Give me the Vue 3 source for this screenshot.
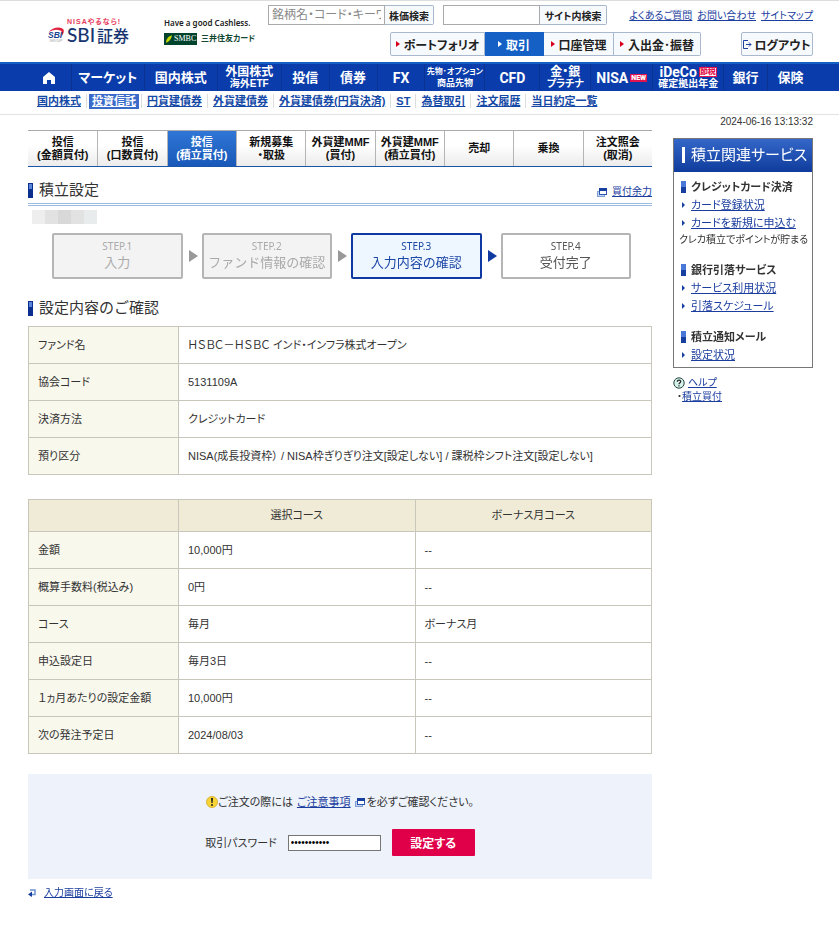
<script setup>
import { ref } from 'vue'

const stockQuery = ref('')
const siteQuery = ref('')
const password = ref('password123')

const helpLinks = ['よくあるご質問', 'お問い合わせ', 'サイトマップ']

const actions = [
  { label: 'ポートフォリオ' },
  { label: '取引', active: true },
  { label: '口座管理' },
  { label: '入出金･振替' },
]

const globalNav = [
  { label: 'マーケット' },
  { label: '国内株式' },
  { label: '外国株式', sub: '海外ETF' },
  { label: '投信' },
  { label: '債券' },
  { label: 'FX', latin: true },
  { label: '先物･オプション', sub: '商品先物', small: true },
  { label: 'CFD', latin: true },
  { label: '金・銀', sub: 'プラチナ' },
  { label: 'NISA', latin: true, badge: 'NEW' },
  { label: 'iDeCo', sub: '確定拠出年金', tag: '節税', latin: true },
  { label: '銀行' },
  { label: '保険' },
]

const subNav = [
  { label: '国内株式' },
  { label: '投資信託', active: true },
  { label: '円貨建債券' },
  { label: '外貨建債券' },
  { label: '外貨建債券(円貨決済)' },
  { label: 'ST' },
  { label: '為替取引' },
  { label: '注文履歴' },
  { label: '当日約定一覧' },
]

const tabs = [
  { lines: ['投信', '(金額買付)'] },
  { lines: ['投信', '(口数買付)'] },
  { lines: ['投信', '(積立買付)'], active: true },
  { lines: ['新規募集', '・取扱'] },
  { lines: ['外貨建MMF', '(買付)'] },
  { lines: ['外貨建MMF', '(積立買付)'] },
  { lines: ['売却'] },
  { lines: ['乗換'] },
  { lines: ['注文照会', '(取消)'] },
]

const steps = [
  { no: 'STEP.1', label: '入力', state: 'done' },
  { no: 'STEP.2', label: 'ファンド情報の確認', state: 'done' },
  { no: 'STEP.3', label: '入力内容の確認', state: 'current' },
  { no: 'STEP.4', label: '受付完了', state: 'next' },
]

const fundRows = [
  ['ファンド名', 'ＨＳＢＣ－ＨＳＢＣ インド・インフラ株式オープン'],
  ['協会コード', '5131109A'],
  ['決済方法', 'クレジットカード'],
  ['預り区分', 'NISA(成長投資枠） / NISA枠ぎりぎり注文[設定しない] / 課税枠シフト注文[設定しない]'],
]

const courseRows = [
  ['金額', '10,000円', '--'],
  ['概算手数料(税込み)', '0円', '--'],
  ['コース', '毎月', 'ボーナス月'],
  ['申込設定日', '毎月3日', '--'],
  ['１ヵ月あたりの設定金額', '10,000円', '--'],
  ['次の発注予定日', '2024/08/03', '--'],
]

const services = [
  {
    title: 'クレジットカード決済',
    links: ['カード登録状況', 'カードを新規に申込む'],
    note: 'クレカ積立でポイントが貯まる',
  },
  { title: '銀行引落サービス', links: ['サービス利用状況', '引落スケジュール'] },
  { title: '積立通知メール', links: ['設定状況'] },
]
</script>

<template>
  <div class="page">
    <header class="header">
      <a href="#" class="logo">
        <svg class="logo-mark" viewBox="0 0 32 32" aria-hidden="true">
          <path d="M1 11 C8 0 26 -2 31 5 C33 9 30 15 27 19 C29 12 28 8 24 7 C17 4 8 6 1 11 Z" fill="#e0203c" />
          <text x="0" y="22" class="mark-text">SBI</text>
          <text x="3" y="30" class="mark-group">GROUP</text>
        </svg>
        <span class="logo-words">
          <span class="logo-tag">NISAやるなら!</span>
          <span class="logo-name"><span class="logo-latin">SBI</span>証券</span>
        </span>
      </a>
      <div class="cashless">
        <span class="cashless-copy">Have a good Cashless.</span>
        <span class="cashless-brand">
          <span class="smbc">
            <svg viewBox="0 0 8 10" aria-hidden="true"><path d="M0 10 C0 5 3 1 8 0 C7 5 5 8 0 10Z" fill="#c4d700" /></svg>SMBC
          </span>
          <span class="card-name">三井住友カード</span>
        </span>
      </div>
      <div class="tools">
        <div class="tool-row">
          <form class="search" @submit.prevent>
            <input v-model="stockQuery" class="search-stock" type="text" aria-label="銘柄検索" placeholder="銘柄名・コード・キーワード" />
            <button type="submit">株価検索</button>
          </form>
          <form class="search" @submit.prevent>
            <input v-model="siteQuery" class="search-site" type="text" aria-label="サイト内検索" />
            <button type="submit" class="wide">サイト内検索</button>
          </form>
          <nav class="help-links">
            <a v-for="l in helpLinks" :key="l" href="#">{{ l }}</a>
          </nav>
        </div>
        <div class="action-row">
          <div class="actions">
            <button v-for="a in actions" :key="a.label" type="button" :class="{ active: a.active }">
              <i class="caret"></i>{{ a.label }}
            </button>
          </div>
          <button type="button" class="logout">
            <svg viewBox="0 0 9 9" aria-hidden="true">
              <path d="M5 .5H.5V8.5H5M3 4.5H8M6 2.5L8 4.5L6 6.5" fill="none" stroke="#1d3fa0" />
            </svg>ログアウト
          </button>
        </div>
      </div>
    </header>

    <nav class="global-nav">
      <a href="#" aria-label="ホーム">
        <svg class="home" viewBox="0 0 12 12"><path d="M6 0L12 5V12H8V8H4V12H0V5Z" fill="#fff" /></svg>
      </a>
      <a v-for="n in globalNav" :key="n.label" href="#" :class="{ double: n.sub, small: n.small, latin: n.latin }">
        <span class="nav-main">{{ n.label }}<b v-if="n.badge" class="new">{{ n.badge }}</b><b v-if="n.tag" class="tag">{{ n.tag }}</b></span>
        <span v-if="n.sub" class="nav-sub">{{ n.sub }}</span>
      </a>
    </nav>

    <nav class="sub-nav">
      <span v-for="s in subNav" :key="s.label" class="sub-item">
        <a href="#" :class="{ active: s.active }">{{ s.label }}</a>
      </span>
    </nav>

    <p class="stamp">2024-06-16 13:13:32</p>

    <div class="columns">
      <main class="main">
        <nav class="tabs">
          <a v-for="(t, i) in tabs" :key="i" href="#" :class="{ active: t.active }">
            <span v-for="line in t.lines" :key="line">{{ line }}</span>
          </a>
        </nav>

        <div class="title-bar">
          <h1 class="heading">積立設定</h1>
          <a href="#" class="power">
            <svg class="window-icon" viewBox="0 0 10 9" aria-hidden="true">
              <rect x=".5" y="3.500" width="7" height="5" fill="#c5d5ef" stroke="#7f9fd6" />
              <rect x="2.500" y=".5" width="7" height="6" fill="#fff" stroke="#2b56b0" />
              <path d="M2 0H10V3H2Z" fill="#173f9f" />
            </svg>
            <span>買付余力</span>
          </a>
        </div>

        <div class="mosaic" aria-hidden="true"><i></i><i></i><i></i><i></i><i></i></div>

        <ol class="steps">
          <li v-for="s in steps" :key="s.no" :class="s.state">
            <span class="step-no">{{ s.no }}</span>
            <span class="step-label">{{ s.label }}</span>
          </li>
        </ol>

        <h2 class="heading second">設定内容のご確認</h2>

        <table class="grid">
          <tbody>
            <tr v-for="r in fundRows" :key="r[0]">
              <th scope="row">{{ r[0] }}</th>
              <td>{{ r[1] }}</td>
            </tr>
          </tbody>
        </table>

        <table class="grid course">
          <thead>
            <tr>
              <th></th>
              <th scope="col">選択コース</th>
              <th scope="col">ボーナス月コース</th>
            </tr>
          </thead>
          <tbody>
            <tr v-for="r in courseRows" :key="r[0]">
              <th scope="row">{{ r[0] }}</th>
              <td>{{ r[1] }}</td>
              <td>{{ r[2] }}</td>
            </tr>
          </tbody>
        </table>

        <form class="confirm" @submit.prevent>
          <p class="notice">
            <svg class="warn" viewBox="0 0 12 12" aria-hidden="true">
              <circle cx="6" cy="6" r="5.500" fill="#f7d535" stroke="#d9b43a" />
              <path d="M5 2H7L6.600 7H5.400Z" fill="#222" />
              <circle cx="6" cy="9" r="1" fill="#222" />
            </svg>
            <span>ご注文の際には</span>
            <a href="#">ご注意事項</a>
            <svg class="window-icon" viewBox="0 0 10 9" aria-hidden="true">
              <rect x=".5" y="3.500" width="7" height="5" fill="#c5d5ef" stroke="#7f9fd6" />
              <rect x="2.500" y=".5" width="7" height="6" fill="#fff" stroke="#2b56b0" />
              <path d="M2 0H10V3H2Z" fill="#173f9f" />
            </svg>
            <span>を必ずご確認ください。</span>
          </p>
          <div class="password-row">
            <label for="trade-password">取引パスワード</label>
            <input id="trade-password" v-model="password" type="password" autocomplete="off" autofocus />
            <button type="submit">設定する</button>
          </div>
        </form>

        <a href="#" class="back">
          <svg viewBox="0 0 8 8" aria-hidden="true">
            <path d="M2 1H7V5.500H3" fill="none" stroke="#6d92d2" stroke-width="1.500" />
            <path d="M0 5.500L4 2.500V8Z" fill="#173f9f" />
          </svg>
          <span>入力画面に戻る</span>
        </a>
      </main>

      <aside class="side">
        <section class="services">
          <h2>積立関連サービス</h2>
          <div v-for="s in services" :key="s.title" class="service">
            <h3>{{ s.title }}</h3>
            <ul>
              <li v-for="l in s.links" :key="l"><a href="#">{{ l }}</a></li>
            </ul>
            <p v-if="s.note">{{ s.note }}</p>
          </div>
        </section>
        <div class="help">
          <svg viewBox="0 0 12 12" aria-hidden="true">
            <circle cx="6" cy="6" r="5.200" fill="#d7f2ea" stroke="#24463e" />
            <path d="M4.300 4.800C4.300 2.600 7.800 2.700 7.700 4.700C7.600 5.800 6 5.900 6 7.300M6 8.300V9.400" fill="none" stroke="#222" stroke-width="1.200" />
          </svg>
          <a href="#">ヘルプ</a>
        </div>
        <div class="help-item">・<a href="#">積立買付</a></div>
      </aside>
    </div>
  </div>
</template>

<style>
body {
  margin: 0;
  background: #fff;
}
</style>

<style scoped>
.page {
  border-top: 1px solid #ddd;
  color: #333;
  font-family: "Liberation Sans", "Noto Sans CJK JP", sans-serif;
  font-size: 11px;
  line-height: 16px;
  font-feature-settings: "palt";
}
.page * {
  box-sizing: border-box;
}
a {
  color: #1a3d9e;
}
p, h1, h2, h3, ul, ol {
  margin: 0;
  padding: 0;
}
ul, ol {
  list-style: none;
}
button, input {
  font-family: inherit;
  font-feature-settings: inherit;
  margin: 0;
}
button {
  white-space: nowrap;
}

/* header */
.header {
  display: flex;
  height: 61px;
  padding: 4px 26px 0 48px;
}
.logo {
  display: flex;
  width: 83px;
  padding-top: 12px;
  text-decoration: none;
}
.logo-mark {
  width: 16px;
  height: 16px;
  margin-top: 10px;
  margin-right: 3px;
}
.mark-text {
  font: italic bold 17px "Liberation Sans", sans-serif;
  fill: #183f8c;
}
.mark-group {
  font: 7px "Liberation Sans", sans-serif;
  fill: #999;
}
.logo-words {
  display: flex;
  flex-direction: column;
  white-space: nowrap;
}
.logo-tag {
  color: #e63c5c;
  font-size: 7px;
  font-weight: bold;
  line-height: 9px;
  letter-spacing: 1px;
}
.logo-name {
  display: flex;
  align-items: center;
  gap: 2px;
  color: #17356f;
  font-family: "Noto Sans CJK JP", sans-serif;
  font-size: 16px;
  font-weight: 500;
  line-height: 18px;
}
.logo-latin {
  font-family: Lato, sans-serif;
  font-size: 19px;
}
.cashless {
  display: flex;
  flex-direction: column;
  width: 92px;
  margin-left: 33px;
  padding-top: 11px;
  gap: 1px;
  white-space: nowrap;
}
.cashless-copy {
  color: #222;
  font-family: "Noto Sans", sans-serif;
  font-size: 8px;
  font-weight: 600;
  line-height: 14px;
}
.cashless-brand {
  display: flex;
  align-items: center;
  gap: 4px;
}
.smbc {
  display: flex;
  align-items: center;
  gap: 2px;
  width: 33px;
  height: 12px;
  padding-left: 2px;
  background: #00432d;
  color: #fff;
  font-family: "Liberation Serif", serif;
  font-size: 8px;
}
.smbc svg {
  width: 6px;
  height: 8px;
}
.card-name {
  color: #124832;
  font-size: 8px;
  font-weight: bold;
}
.tools {
  flex: 1;
  margin-left: 12px;
  min-width: 0;
}
.tool-row {
  display: flex;
  gap: 9px;
}
.search {
  display: flex;
}
.search input {
  height: 20px;
  padding: 0 3px;
  border: 1px solid #aaa;
  border-radius: 0;
  background: #fff;
  font-size: 12px;
  outline: 0;
}
.search input::placeholder {
  color: #888;
}
.search-stock {
  width: 117px;
}
.search-site {
  width: 97px;
}
.search button {
  width: 49px;
  height: 20px;
  padding: 0;
  border: 1px solid #a9b7cd;
  border-left: 0;
  border-radius: 0 2px 2px 0;
  background: #f7fafd;
  color: #222;
  font-size: 10px;
  font-weight: bold;
}
.search button.wide {
  width: 67px;
}
.help-links {
  display: flex;
  gap: 5px;
  margin-left: auto;
  padding-top: 3px;
  font-size: 10px;
  white-space: nowrap;
}
.action-row {
  display: flex;
  justify-content: space-between;
  margin-top: 7px;
  padding-left: 122px;
}
.actions {
  display: flex;
}
.actions button, .logout {
  display: flex;
  align-items: center;
  justify-content: center;
  gap: 4px;
  height: 24px;
  padding: 0 7px;
  border: 1px solid #aab8cf;
  background: #f7fafd;
  color: #222;
  font-size: 12px;
  font-weight: bold;
}
.actions button {
  width: 70px;
  border-left-width: 0;
}
.actions button:first-child {
  width: 95px;
  border-left-width: 1px;
  border-radius: 2px 0 0 2px;
}
.actions button:last-child {
  width: 87px;
  border-radius: 0 2px 2px 0;
}
.actions button.active {
  width: 59px;
  border-color: #1560c5;
  background: #1560c5;
  color: #fff;
}
.caret {
  border: 3px solid transparent;
  border-right-width: 0;
  border-left: 4px solid #d9001b;
}
.active .caret {
  border-left-color: #fff;
}
.logout {
  width: 72px;
  padding: 0;
  gap: 2px;
  border-radius: 2px;
}
.logout svg {
  width: 9px;
  height: 9px;
}

/* navigation */
.global-nav {
  display: grid;
  grid-template-columns: 43fr 73fr 73fr 64fr 48fr 48fr 48fr 60fr 55fr 51fr 62fr 71fr 44fr 46fr;
  height: 29px;
  padding: 0 26px 0 28px;
  border-top: 2px solid #1560c5;
  background: #0a3cab;
}
.global-nav a {
  display: flex;
  flex-direction: column;
  align-items: center;
  justify-content: center;
  min-width: 0;
  color: #fff;
  font-size: 13px;
  font-weight: bold;
  line-height: 14px;
  text-decoration: none;
  white-space: nowrap;
}
.global-nav a + a {
  border-left: 1px solid #0a3393;
}
.global-nav .latin .nav-main {
  font-family: Roboto, "Noto Sans CJK JP", sans-serif;
  font-size: 14px;
}
.home {
  width: 12px;
  height: 12px;
}
.global-nav .double {
  font-size: 12px;
  line-height: 12px;
}
.global-nav .double .nav-sub {
  font-size: 10px;
  line-height: 11px;
}
.global-nav .small {
  font-size: 8px;
}
.global-nav .small .nav-sub {
  font-size: 9px;
}
.nav-main {
  display: flex;
  align-items: center;
  gap: 2px;
}
.new, .tag {
  padding: 0 1px;
  background: #e2144f;
  color: #fff;
  font-size: 7px;
  line-height: 8px;
}
.tag {
  padding: 0;
  border: 1px solid #e2144f;
  background: #fff;
  color: #e2144f;
  font-size: 8px;
}
.sub-nav {
  display: flex;
  height: 24px;
  padding: 3px 32px 0;
  border-bottom: 1px solid #e3e3e3;
  white-space: nowrap;
}
.sub-item {
  padding: 0 5px;
}
.sub-item a {
  display: block;
  color: #1449a6;
  font-weight: bold;
  line-height: 15px;
}
.sub-item + .sub-item {
  border-left: 1px solid #ddd;
  height: 14px;
}
.sub-item a.active {
  margin: 0 -3px;
  padding: 0 3px;
  background: #3b6bc9;
  color: #fff;
}
.stamp {
  height: 15px;
  padding: 0 26px;
  font-size: 10px;
  line-height: 14px;
  text-align: right;
}

/* body */
.columns {
  display: flex;
  align-items: flex-start;
  gap: 21px;
  padding: 0 26px 28px 28px;
}
.main {
  flex: 1;
  min-width: 0;
}
.tabs {
  display: grid;
  grid-template-columns: repeat(9, 1fr);
  height: 37px;
  border-top: 1px solid #aaa;
  border-bottom: 1px solid #1a56a8;
}
.tabs a {
  display: flex;
  flex-direction: column;
  align-items: center;
  justify-content: center;
  min-width: 0;
  background: linear-gradient(#fff 40%, #ececec);
  color: #111;
  font-size: 11px;
  font-weight: bold;
  line-height: 13px;
  text-decoration: none;
  white-space: nowrap;
}
.tabs a + a {
  border-left: 1px solid #b5b5b5;
}
.tabs a.active {
  background: linear-gradient(#2f76d6, #1858b8);
  color: #fff;
}
.title-bar {
  display: flex;
  align-items: center;
  justify-content: space-between;
  margin-top: 11px;
  padding-bottom: 1px;
  border-bottom: 3px double #9dbbe0;
}
.heading {
  display: flex;
  align-items: center;
  gap: 6px;
  color: #333;
  font-size: 15px;
  font-weight: normal;
  line-height: 24px;
  font-feature-settings: normal;
}
.heading::before {
  content: "";
  width: 5px;
  height: 15px;
  background: linear-gradient(#5b85d8 40%, #0a2f8e 40%);
  border: 1px solid #0a2f8e;
  box-sizing: border-box;
}
.power {
  display: flex;
  align-items: center;
  gap: 5px;
  padding-top: 4px;
  font-size: 10px;
  text-decoration: none;
}
.power span {
  text-decoration: underline;
}
.window-icon {
  width: 10px;
  height: 9px;
}
.mosaic {
  display: grid;
  grid-template-columns: repeat(5, 13px);
  height: 14px;
  margin: 4px 4px 0;
}
.mosaic i {
  background: #e2e2e2;
}
.mosaic i:nth-child(1) {
  background: #eee;
}
.mosaic i:nth-child(3) {
  background: #d8d8d8;
}
.mosaic i:nth-child(5) {
  background: #e9eced;
}
.steps {
  display: grid;
  grid-template-columns: repeat(4, 1fr);
  gap: 19px;
  margin-top: 9px;
  padding: 0 21px 0 24px;
}
.steps li {
  position: relative;
  display: flex;
  flex-direction: column;
  align-items: center;
  height: 46px;
  padding-top: 4px;
  border: 2px solid #b5b5b5;
  border-radius: 2px;
  background: #fff;
  color: #555;
  font-family: "Noto Sans", "Noto Sans CJK JP", sans-serif;
  white-space: nowrap;
}
.steps .done {
  background: #f3f3f3;
  color: #aaa;
}
.steps .current {
  border-color: #0f38a0;
  background: #eef6ff;
  color: #1b47a5;
}
.steps li:not(:last-child)::after {
  content: "";
  position: absolute;
  top: 15px;
  right: -17px;
  border: 6px solid transparent;
  border-right-width: 0;
  border-left: 9px solid #999;
}
.steps .current:not(:last-child)::after {
  border-left-color: #0f38a0;
}
.step-no {
  font-size: 10px;
  line-height: 14px;
}
.step-label {
  font-size: 13px;
  line-height: 18px;
  font-feature-settings: normal;
}
.second {
  margin: 17px 0 6px;
}
.grid {
  width: 100%;
  border-collapse: collapse;
  table-layout: fixed;
}
.grid th, .grid td {
  height: 37px;
  padding: 0 9px 1px;
  border: 1px solid #c9c6bb;
  font-weight: normal;
  text-align: left;
}
.grid th {
  width: 150px;
  background: #f9f8ed;
}
.grid thead th {
  height: 32px;
  background: #efebd7;
  text-align: center;
}
.grid thead th + th {
  width: auto;
}
.course {
  margin-top: 24px;
}
.confirm {
  display: flex;
  flex-direction: column;
  align-items: center;
  gap: 19px;
  margin-top: 20px;
  padding: 20px 0 23px;
  background: #edf2fb;
}
.notice {
  display: flex;
  align-items: center;
  gap: 4px;
}
.notice .warn {
  width: 12px;
  height: 12px;
  margin-right: -4px;
}
.notice .window-icon + span {
  margin-left: -2px;
}
.password-row {
  display: flex;
  align-items: center;
  gap: 11px;
}
.password-row input {
  width: 93px;
  height: 16px;
  padding: 0 2px;
  border: 1px solid #767676;
  border-radius: 0;
  background: #fff;
  color: #000;
  font-size: 10px;
  outline: 0;
}
.password-row button {
  width: 83px;
  height: 27px;
  padding: 0;
  border: 0;
  border-radius: 1px;
  background: #e00049;
  color: #fff;
  font-size: 12px;
  font-weight: bold;
}
.back {
  display: flex;
  align-items: center;
  gap: 8px;
  margin-top: 6px;
  font-size: 10px;
  text-decoration: none;
}
.back span {
  text-decoration: underline;
}
.back svg {
  width: 8px;
  height: 8px;
}

/* sidebar */
.side {
  width: 140px;
  margin-top: 8px;
}
.services {
  padding-bottom: 3px;
  border: 1px solid #777;
}
.services h2 {
  display: flex;
  align-items: center;
  gap: 6px;
  height: 33px;
  padding-left: 8px;
  padding-bottom: 2px;
  background: linear-gradient(#3467c9, #0f3c9c);
  color: #fff;
  font-size: 15px;
  font-weight: normal;
  white-space: nowrap;
}
.services h2::before {
  content: "";
  width: 3px;
  height: 16px;
  background: #fff;
}
.service {
  padding: 6px 5px 0 7px;
  white-space: nowrap;
}
.service + .service {
  padding-top: 13px;
}
.service h3 {
  display: flex;
  align-items: center;
  gap: 5px;
  font-size: 11px;
  line-height: 18px;
}
.service h3::before {
  content: "";
  width: 5px;
  height: 12px;
  background: linear-gradient(#4a78d8 50%, #173f9f 50%);
}
.service li {
  display: flex;
  align-items: center;
  gap: 6px;
  line-height: 18px;
}
.service li::before {
  content: "";
  border: 3px solid transparent;
  border-right-width: 0;
  border-left: 3px solid #173f9f;
  margin-left: 1px;
}
.service p {
  margin-left: -2px;
  font-size: 10px;
}
.help {
  display: flex;
  align-items: center;
  gap: 3px;
  margin-top: 7px;
  font-size: 10px;
}
.help svg {
  width: 12px;
  height: 12px;
}
.help-item {
  padding-left: 4px;
  line-height: 12px;
  font-size: 10px;
}
</style>
